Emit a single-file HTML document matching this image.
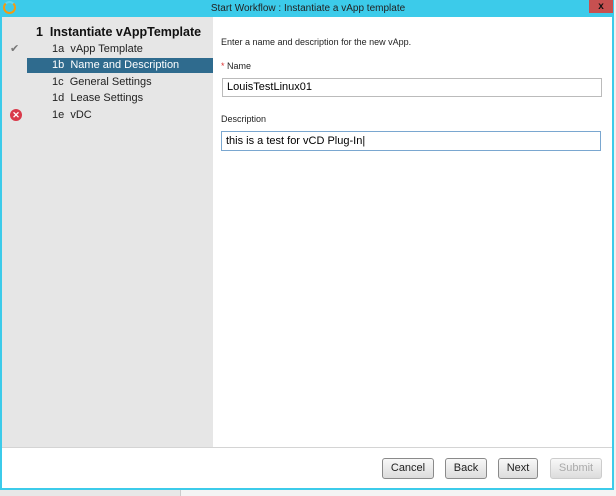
<!DOCTYPE html>
<html><head><style>
body{margin:0;width:616px;height:496px;overflow:hidden;background:#f0f0f0;font-family:"Liberation Sans",sans-serif;position:relative}
.a{position:absolute}
.btn{position:absolute;top:458px;height:19px;border:1px solid #8a8a8a;border-radius:3px;background:linear-gradient(#f8f8f8,#dcdcdc);font-size:11px;text-align:center;line-height:19px;color:#222}
.nav{position:absolute;left:0;width:211px;height:15px;font-size:11px;line-height:15px;color:#222}
</style></head><body>
<div class="a" style="left:0;top:490px;width:616px;height:6px;background:#e8e8e8"></div>
<div class="a" style="left:180px;top:489px;width:436px;height:7px;background:#f4f4f4;border-left:1px solid #ccc"></div>
<div class="a" style="left:0;top:0;width:614px;height:490px;background:#3ccbea"></div>
<div class="a" style="left:2px;top:17px;width:610px;height:471px;background:#fff"></div>
<div class="a" style="left:2px;top:17px;width:211px;height:430px;background:#e6e6e6"></div>
<div class="a" style="left:2px;top:447px;width:610px;height:1px;background:#d4d4d4"></div>
<div class="a" style="left:3px;top:1px;width:9px;height:9px;border:2.5px solid #f39c12;border-radius:50%;border-top-color:#fff3"></div>
<div class="a" style="left:0;top:3px;width:616px;text-align:center;font-size:10px;color:#222">Start Workflow : Instantiate a vApp template</div>
<div class="a" style="left:589px;top:0;width:24px;height:13px;background:#c75050;color:#111;font-size:10px;font-weight:bold;text-align:center;line-height:13px">x</div>
<div class="a" style="left:36px;top:25px;font-size:12.5px;font-weight:bold;color:#111">1&nbsp; Instantiate vAppTemplate</div>
<div class="nav" style="top:42px"><span class="a" style="left:10px;color:#777">✔</span><span class="a" style="left:52px">1a&nbsp; vApp Template</span></div>
<div class="nav" style="top:58px;left:27px;width:186px;background:#2f6b8e;color:#fff"><span class="a" style="left:25px">1b&nbsp; Name and Description</span></div>
<div class="nav" style="top:75px"><span class="a" style="left:52px">1c&nbsp; General Settings</span></div>
<div class="nav" style="top:91px"><span class="a" style="left:52px">1d&nbsp; Lease Settings</span></div>
<div class="nav" style="top:108px"><span class="a" style="left:10px;top:1px;width:12px;height:12px;border-radius:50%;background:#d9394a;color:#fff;font-size:9px;line-height:12px;text-align:center;font-weight:bold">✕</span><span class="a" style="left:52px">1e&nbsp; vDC</span></div>
<div class="a" style="left:221px;top:37px;font-size:9px;color:#222">Enter a name and description for the new vApp.</div>
<div class="a" style="left:221px;top:61px;font-size:9px;color:#222"><span style="color:#d33">*</span> Name</div>
<div class="a" style="left:222px;top:78px;width:377px;height:17px;border:1px solid #bbb;font-size:11px;line-height:17px;padding-left:4px;box-sizing:border-box;width:380px;height:19px">LouisTestLinux01</div>
<div class="a" style="left:221px;top:114px;font-size:9px;color:#222">Description</div>
<div class="a" style="left:221px;top:131px;width:380px;height:20px;border:1px solid #7aa7d0;box-sizing:border-box;font-size:11px;line-height:18px;padding-left:4px">this is a test for vCD Plug-In|</div>
<div class="btn" style="left:382px;width:50px">Cancel</div>
<div class="btn" style="left:445px;width:40px">Back</div>
<div class="btn" style="left:498px;width:38px">Next</div>
<div class="btn" style="left:550px;width:50px;color:#aaa;border-color:#ccc">Submit</div>
</body></html>
